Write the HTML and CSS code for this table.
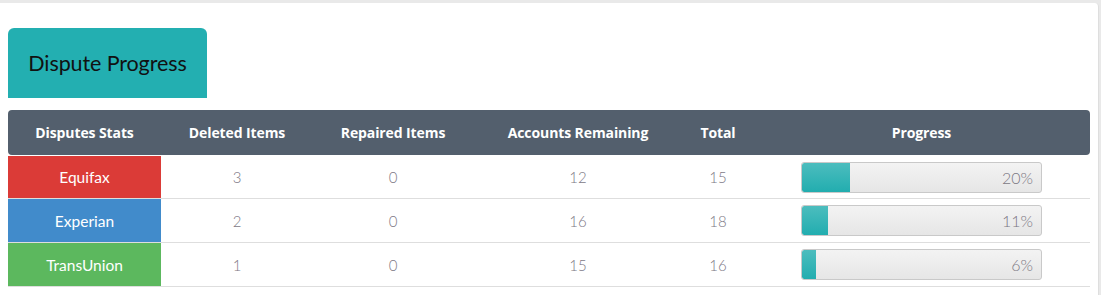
FILE: index.html
```html
<!DOCTYPE html>
<html>
<head>
<meta charset="utf-8">
<link rel="stylesheet" href="styles.css">
</head>
<body>
<div class="card">
  <div class="tab"><h2 class="tab-title">Dispute Progress</h2></div>
  <table class="stats">
    <colgroup>
      <col class="c1"><col class="c2"><col class="c3"><col class="c4"><col class="c5"><col class="c6">
    </colgroup>
    <thead>
      <tr>
        <th>Disputes Stats</th>
        <th>Deleted Items</th>
        <th>Repaired Items</th>
        <th>Accounts Remaining</th>
        <th>Total</th>
        <th>Progress</th>
      </tr>
    </thead>
    <tbody>
      <tr>
        <td class="bureau equifax">Equifax</td>
        <td>3</td><td>0</td><td>12</td><td>15</td>
        <td><div class="bar"><div class="fill" style="width:20%"></div><span class="pct">20%</span></div></td>
      </tr>
      <tr>
        <td class="bureau experian">Experian</td>
        <td>2</td><td>0</td><td>16</td><td>18</td>
        <td><div class="bar"><div class="fill" style="width:11%"></div><span class="pct">11%</span></div></td>
      </tr>
      <tr>
        <td class="bureau transunion">TransUnion</td>
        <td>1</td><td>0</td><td>15</td><td>16</td>
        <td><div class="bar"><div class="fill" style="width:6%"></div><span class="pct">6%</span></div></td>
      </tr>
    </tbody>
  </table>
</div>
</body>
</html>
```
FILE: styles.css
```css
html, body {
  margin: 0;
  padding: 0;
  background: #e9e9e9;
  font-family: Lato, "Liberation Sans", sans-serif;
}
body {
  padding-top: 3px;
  height: 292px;
  overflow: hidden;
}
.card {
  background: #fff;
  width: 1099px;
  height: 300px;
  border-right: 1px solid #dedede;
  border-top-right-radius: 4px;
  box-sizing: border-box;
  padding: 25px 0 0 8px;
}
.tab {
  width: 199px;
  height: 70px;
  background: #23afb1;
  border-radius: 6px 6px 0 0;
  display: flex;
  align-items: center;
  justify-content: center;
}
.tab-title {
  margin: 0;
  font-size: 21.5px;
  font-weight: 400;
  color: #111;
  letter-spacing: -0.1px;
}
.stats {
  margin-top: 12px;
  width: 1082px;
  border-collapse: separate;
  border-spacing: 0;
  table-layout: fixed;
}
.c1 { width: 153px; }
.c2 { width: 152px; }
.c3 { width: 160px; }
.c4 { width: 210px; }
.c5 { width: 70px; }
.c6 { width: 337px; }
.stats th {
  background: #535f6d;
  color: #fff;
  font-family: "Open Sans", sans-serif;
  font-size: 14px;
  font-weight: 700;
  height: 45px;
  padding: 0;
  text-align: center;
  letter-spacing: -0.1px;
}
.stats th:first-child { border-radius: 4px 0 0 4px; }
.stats th:last-child { border-radius: 0 4px 4px 0; }
.stats td {
  height: 43px;
  box-sizing: border-box;
  padding: 0;
  text-align: center;
  font-size: 15px;
  font-weight: 300;
  color: #7d7885;
  border-bottom: 1px solid #dedede;
}
.stats tbody tr:first-child td {
  border-top: 1px solid #fff;
  height: 44px;
}
.stats tbody tr + tr td { height: 44px; }
.stats td.bureau {
  color: #fff;
  font-size: 15.5px;
  font-weight: 400;
}
.equifax { background: #db3b37; }
.experian { background: #418bcb; }
.transunion { background: #5cb85e; }
.bar {
  position: relative;
  width: 241px;
  height: 31px;
  margin: 0 auto;
  box-sizing: border-box;
  border: 1px solid #c9c9c9;
  border-radius: 3px;
  background: linear-gradient(#f3f3f3, #e6e6e6);
  overflow: hidden;
}
.fill {
  height: 100%;
  background: linear-gradient(#4cbdbe, #22adaf);
  border-radius: 2px 0 0 2px;
}
.pct {
  position: absolute;
  right: 8px;
  top: 0;
  line-height: 29px;
  font-size: 16px;
  font-weight: 300;
  color: #7c7884;
}
```
